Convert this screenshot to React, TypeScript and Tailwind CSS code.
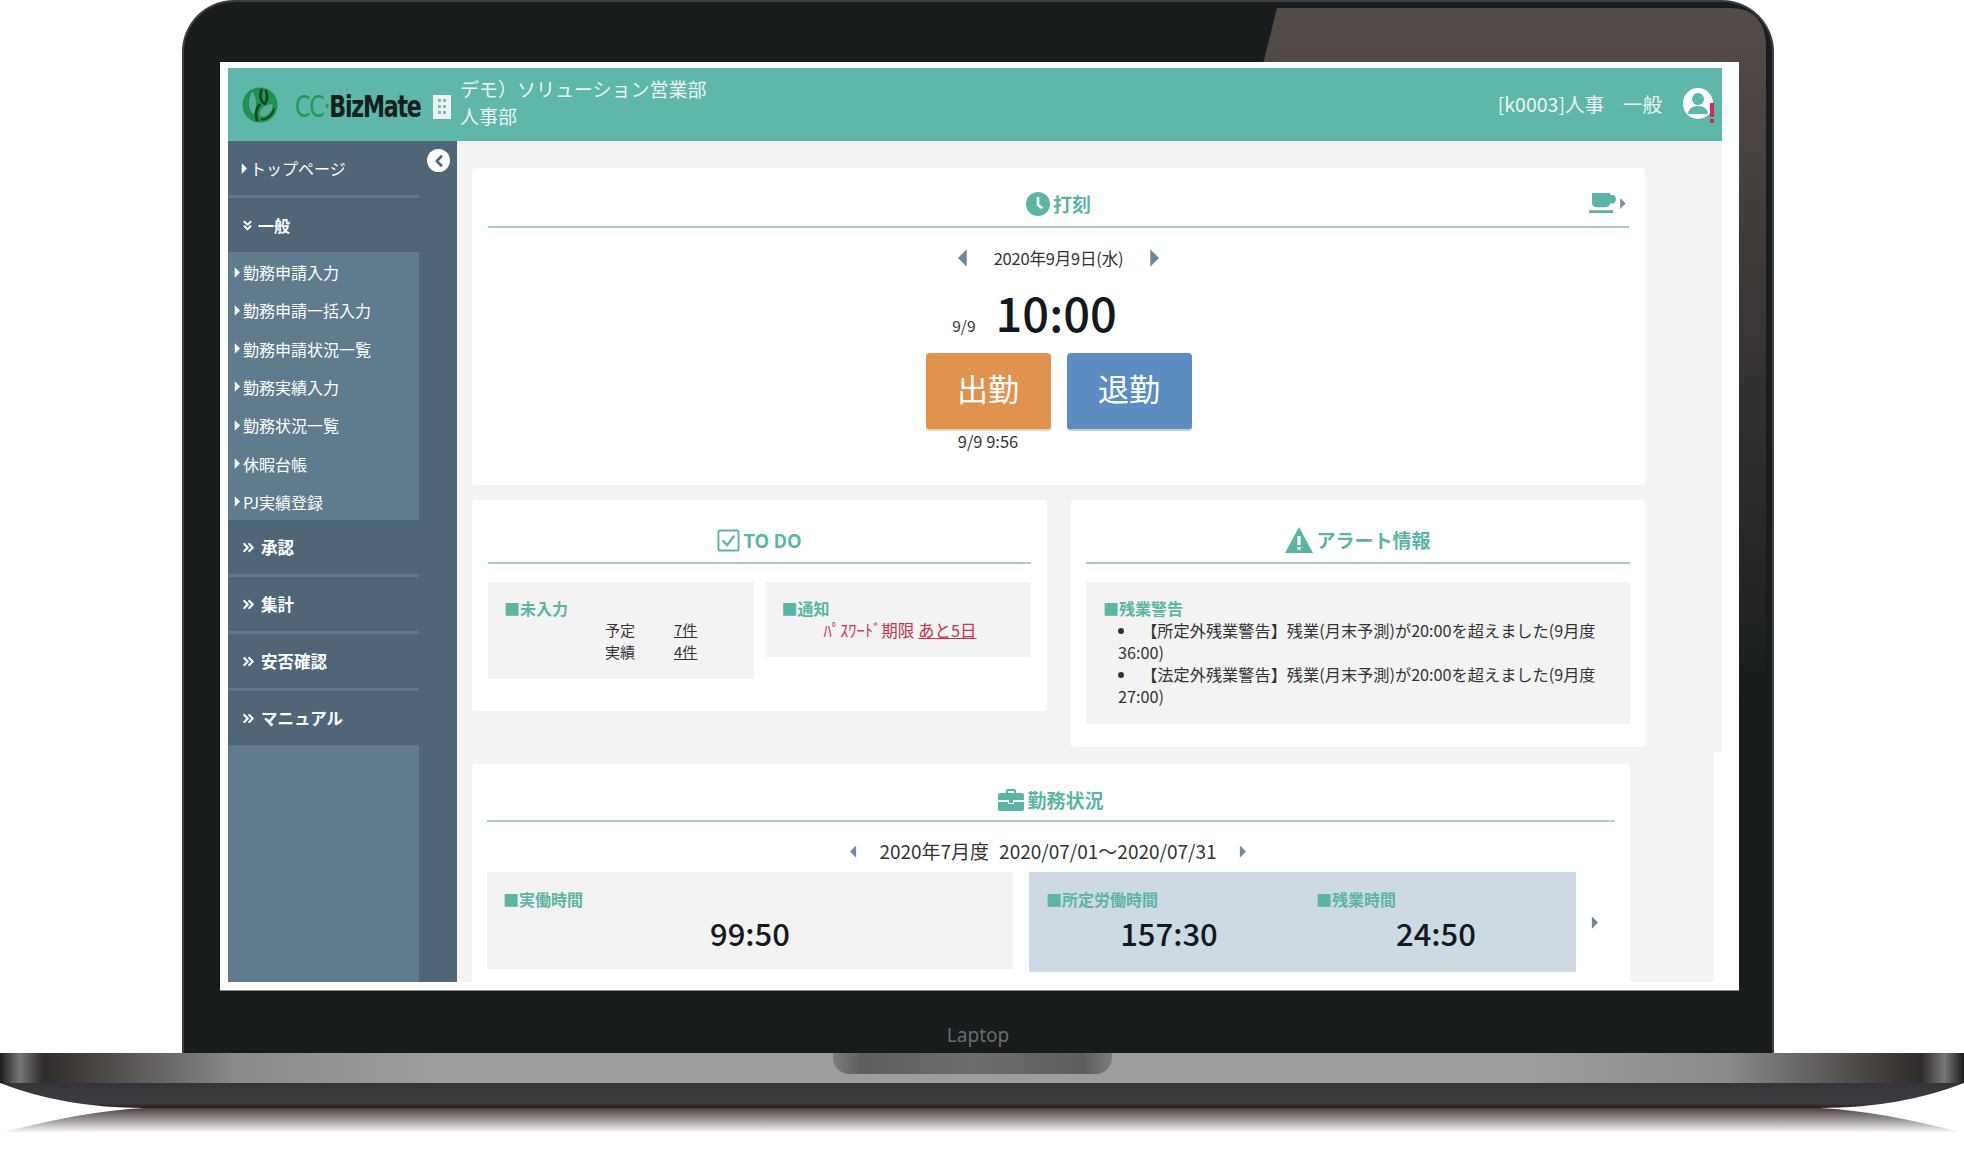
import { ChevronsDown, ChevronsRight, ChevronLeft } from "lucide-react";

const cjk = { fontFamily: '"Noto Sans CJK JP", "Noto Sans", sans-serif' };

const subItems = ["勤務申請入力", "勤務申請一括入力", "勤務申請状況一覧", "勤務実績入力", "勤務状況一覧", "休暇台帳", "PJ実績登録"];
const lowerItems = ["承認", "集計", "安否確認", "マニュアル"];

function TriRight({ className }: { className?: string }) {
  return (
    <svg viewBox="0 0 8 14" className={className}>
      <path d="M1 0 L8 7 L1 14 Z" fill="currentColor" />
    </svg>
  );
}

function TriLeft({ className }: { className?: string }) {
  return (
    <svg viewBox="0 0 8 14" className={className}>
      <path d="M7 0 L0 7 L7 14 Z" fill="currentColor" />
    </svg>
  );
}

function Logo() {
  return (
    <svg viewBox="0 0 40 40" className="w-[38px] h-[38px] shrink-0">
      <circle cx="20" cy="20" r="18.5" fill="#1f9150" />
      <path d="M12 6 C7 13 7 24 13 30 C17 24 17 13 12 6 Z" fill="#58ad9d" />
      <path d="M20 32 C19 24 24 20 33 19 C34 27 28 33 20 32 Z" fill="#58ad9d" />
      <path d="M22 3 C19 9 20 16 25 19 C28 15 28 9 26 4" stroke="#0d4024" strokeWidth="2.6" fill="none" />
      <path d="M17 37 C15 30 15 25 20 19" stroke="#0d4024" strokeWidth="2.6" fill="none" />
      <path d="M21 35 C27 36 33 31 35 24" stroke="#0d4024" strokeWidth="2" fill="none" />
    </svg>
  );
}

function SectionTitle({ icon, text, className }: { icon: React.ReactNode; text: string; className?: string }) {
  return (
    <div className={`flex items-center justify-center gap-[3px] border-b-2 border-[#a5d0c6] text-[#5cb4a6] font-bold ${className}`}>
      {icon}
      <span>{text}</span>
    </div>
  );
}

function Label({ text }: { text: string }) {
  return <div className="text-[16px] leading-[22px] font-bold text-[#5cb4a6] whitespace-nowrap">■{text}</div>;
}

function Sidebar() {
  return (
    <aside className="relative w-[229px] shrink-0 bg-[#4e6678] text-white flex flex-col" style={cjk}>
      <div className="w-[191px] flex flex-col flex-1 font-bold">
        <div className="h-[54px] flex items-center pl-[13px] gap-[3px] text-[16px] font-normal border-b-[3px] border-[#617889] box-content">
          <TriRight className="w-[6px] h-[11px]" />
          トップページ
        </div>
        <div className="h-[54px] flex items-center pl-[12px] gap-[3px] text-[16px]">
          <ChevronsDown className="w-[15px] h-[15px]" strokeWidth={3} />
          一般
        </div>
        <div className="h-[268px] bg-[#5f7b8e] flex flex-col font-normal">
          {subItems.map((item) => (
            <div key={item} className="h-[38.3px] flex items-center pl-[6px] pt-[2px] gap-[3px] text-[16px]">
              <TriRight className="w-[6px] h-[11px]" />
              {item}
            </div>
          ))}
        </div>
        {lowerItems.map((item, i) => (
          <div
            key={item}
            className={`h-[54px] box-content flex items-center pl-[12px] gap-[4px] text-[16.5px] ${i < 3 ? "border-b-[3px] border-[#617889]" : ""}`}
          >
            <ChevronsRight className="w-[17px] h-[17px]" strokeWidth={3} />
            {item}
          </div>
        ))}
        <div className="flex-1 bg-[#5f7b8e]" />
      </div>
      <button className="absolute left-[199px] top-[8px] w-[23px] h-[23px] rounded-full bg-white flex items-center justify-center text-[#4e6678]">
        <ChevronLeft className="w-[18px] h-[18px]" strokeWidth={3.5} />
      </button>
    </aside>
  );
}

function PunchCard() {
  return (
    <section className="w-[1173px] h-[317px] bg-white rounded-[4px] px-[16px] flex flex-col items-center">
      <div className="relative w-full">
        <SectionTitle
          className="h-[60px] w-full text-[19px] pt-[14px]"
          text="打刻"
          icon={
            <svg viewBox="0 0 24 24" className="w-[24px] h-[24px]">
              <circle cx="12" cy="12" r="12" fill="#5cb4a6" />
              <path d="M12 5 V13 L16.5 16" stroke="#fff" strokeWidth="2.6" fill="none" />
            </svg>
          }
        />
        <div className="absolute right-[3px] top-[25px] flex items-center gap-[3px] text-[#5cb4a6]">
          <svg viewBox="0 0 28 22" className="w-[27px] h-[21px]">
            <path d="M3 0 H22 V2 H24 Q28 2 28 6 Q28 11 24 11 H22 Q21 15 17 15 H8 Q4 15 3 11 Z" fill="currentColor" />
            <rect x="0" y="18" width="25" height="3" fill="currentColor" />
          </svg>
          <TriRight className="w-[7px] h-[11px] text-[#7a93a5]" />
        </div>
      </div>
      <div className="flex items-center gap-[25px] mt-[18px] h-[24px] text-[16.5px] text-[#333]">
        <TriLeft className="w-[10px] h-[18px] text-[#71889b]" />
        <span className="w-[131px] text-center whitespace-nowrap tracking-[-0.2px]">2020年9月9日(水)</span>
        <TriRight className="w-[10px] h-[18px] text-[#71889b]" />
      </div>
      <div className="flex items-end gap-[20px] mt-[18px] h-[48px] mr-[48px]">
        <span className="text-[15.5px] leading-[21px] text-[#333]">9/9</span>
        <span className="text-[47px] leading-[48px] font-medium text-[#14181f]">10:00</span>
      </div>
      <div className="flex gap-[16px] mt-[17px]">
        <div className="w-[125px] h-[78px] pb-[5px] rounded-[4px] bg-[#e0924f] text-white text-[31px] flex items-center justify-center border-b-2 border-[#efd0b4]">
          出勤
        </div>
        <div className="w-[125px] h-[78px] pb-[5px] rounded-[4px] bg-[#5b8dc1] text-white text-[31px] flex items-center justify-center border-b-2 border-[#bccfe3]">
          退勤
        </div>
      </div>
      <div className="w-[266px] text-[16.5px] leading-[22px] text-[#333] -mt-[1px]">
        <span className="block w-[125px] text-center whitespace-nowrap">9/9 9:56</span>
      </div>
    </section>
  );
}

function TodoCard() {
  return (
    <section className="w-[575px] h-[211px] bg-white rounded-[4px] px-[16px]">
      <SectionTitle
        className="h-[64px] text-[19px] pt-[18px]"
        text="TO DO"
        icon={
          <svg viewBox="0 0 24 24" className="w-[23px] h-[23px]" fill="none" stroke="#5cb4a6" strokeWidth="2">
            <rect x="1.5" y="1.5" width="21" height="21" rx="2" />
            <path d="M6 12 L10.5 17 L18 7" strokeWidth="2.4" />
          </svg>
        }
      />
      <div className="flex items-start gap-[11px] mt-[18px]">
        <div className="w-[266px] h-[97px] bg-[#f3f3f3] pl-[16px] pt-[15px] text-[#333]">
          <Label text="未入力" />
          <div className="grid grid-cols-[69px_auto] justify-start pl-[101px] text-[15px] leading-[22px]">
            <span>予定</span>
            <span className="underline">7件</span>
            <span>実績</span>
            <span className="underline">4件</span>
          </div>
        </div>
        <div className="w-[267px] h-[75px] bg-[#f3f3f3] pl-[17px] pt-[15px]">
          <Label text="通知" />
          <div className="pl-[42px] text-[16.5px] leading-[22px] text-[#c5354f] whitespace-nowrap">
            ﾊﾟｽﾜｰﾄﾞ期限 <span className="underline">あと5日</span>
          </div>
        </div>
      </div>
    </section>
  );
}

function AlertCard() {
  return (
    <section className="w-[574px] h-[247px] bg-white rounded-[4px] px-[15px]">
      <SectionTitle
        className="h-[64px] text-[19px] pt-[18px]"
        text="アラート情報"
        icon={
          <svg viewBox="0 0 28 26" className="w-[28px] h-[26px]">
            <path d="M14 0 L28 26 H0 Z" fill="#5cb4a6" />
            <rect x="12.4" y="9" width="3.2" height="9" fill="#fff" />
            <rect x="12.4" y="20" width="3.2" height="3" fill="#fff" />
          </svg>
        }
      />
      <div className="mt-[18px] h-[142px] bg-[#f3f3f3] pl-[17px] pt-[15px] pr-[30px] text-[#333]">
        <Label text="残業警告" />
        <ul className="list-disc list-inside pl-[15px] text-[16.2px] leading-[22px]">
          <li>【所定外残業警告】残業(月末予測)が20:00を超えました(9月度 36:00)</li>
          <li>【法定外残業警告】残業(月末予測)が20:00を超えました(9月度 27:00)</li>
        </ul>
      </div>
    </section>
  );
}

function WorkCard() {
  return (
    <section className="w-[1158px] bg-white rounded-t-[4px] px-[15px] flex-1">
      <SectionTitle
        className="h-[58px] text-[19px] pt-[16px] border-b"
        text="勤務状況"
        icon={
          <svg viewBox="0 0 26 22" className="w-[26px] h-[22px]">
            <path d="M8 5 V2 Q8 0 10 0 H16 Q18 0 18 2 V5 H16 V2 H10 V5 Z" fill="#5cb4a6" />
            <path d="M2 4 H24 Q26 4 26 6 V11 H0 V6 Q0 4 2 4 Z" fill="#5cb4a6" />
            <path d="M0 13 H10 V15 H16 V13 H26 V20 Q26 22 24 22 H2 Q0 22 0 20 Z" fill="#5cb4a6" />
            <rect x="11" y="11" width="4" height="3" fill="#5cb4a6" />
          </svg>
        }
      />
      <div className="flex items-center justify-center gap-[10px] h-[50px] pt-[8px] text-[19px] text-[#333] whitespace-nowrap pr-[6px]">
        <TriLeft className="w-[7px] h-[13px] text-[#71889b] mr-[12px]" />
        <span>2020年7月度</span>
        <span>2020/07/01～2020/07/31</span>
        <TriRight className="w-[7px] h-[13px] text-[#71889b] ml-[12px]" />
      </div>
      <div className="flex items-start">
        <div className="w-[526px] h-[97px] bg-[#f2f2f2] pl-[16px] pt-[16px]">
          <Label text="実働時間" />
          <div className="text-center pr-[16px] text-[31px] leading-[44px] mt-[1px] font-medium text-[#14181f]">99:50</div>
        </div>
        <div className="ml-[16px] w-[547px] h-[100px] bg-[#cedae3] pt-[16px] pl-[17px] flex">
          <div className="w-[270px]">
            <Label text="所定労働時間" />
            <div className="text-center text-[31px] leading-[44px] mt-[1px] font-medium text-[#14181f] pr-[24px]">157:30</div>
          </div>
          <div className="flex-1">
            <Label text="残業時間" />
            <div className="text-center text-[31px] leading-[44px] mt-[1px] font-medium text-[#14181f] pr-[20px]">24:50</div>
          </div>
        </div>
        <TriRight className="w-[7px] h-[13px] text-[#71889b] ml-[15px] mt-[44px]" />
      </div>
    </section>
  );
}

function Screen() {
  return (
    <div className="relative z-10 ml-[36px] mt-[60px] w-[1519px] h-[929px] bg-white border-b border-[#888] pt-[6px] pl-[8px] pr-[17px] pb-[8px] flex flex-col">
      <header className="relative h-[73px] shrink-0 bg-[#5fb7a9] flex items-center text-[#edf5f3]" style={cjk}>
        <div className="ml-[13px]">
          <Logo />
        </div>
        <div
          className="ml-[16px] w-[125px] mt-[4px] text-[30px] font-bold tracking-[-1.5px] whitespace-nowrap origin-left scale-x-[0.82]"
          style={{ fontFamily: '"DejaVu Sans Condensed", "Liberation Sans", sans-serif' }}
        >
          <span className="text-[#1f9a52] font-normal">CC·</span>
          <span className="text-[#12201c]">BizMate</span>
        </div>
        <svg viewBox="0 0 18 24" className="w-[18px] h-[24px] ml-[13px] mt-[4px] shrink-0">
          <rect width="18" height="24" fill="#edf5f3" />
          {[4, 10, 16].map((y) => (
            <g key={y} fill="#8fb5ad">
              <rect x="5" y={y} width="3" height="3" />
              <rect x="10" y={y} width="3" height="3" />
            </g>
          ))}
        </svg>
        <div className="ml-[9px] -mt-[6px] text-[19px] leading-[27px]">
          <div>デモ）ソリューション営業部</div>
          <div>人事部</div>
        </div>
        <div className="ml-auto -mt-[2px] flex items-center text-[19.5px] gap-[19px] pr-[9px]">
          <span>[k0003]人事</span>
          <span>一般</span>
          <div className="ml-[2px] w-[30px] h-[31px] rounded-full bg-white overflow-hidden">
            <svg viewBox="0 0 30 30" className="w-[30px] h-[30px]">
              <circle cx="15" cy="11" r="6" fill="#5fb7a9" />
              <path d="M5 26 Q6 18 15 18 Q24 18 25 26 Z" fill="#5fb7a9" />
            </svg>
          </div>
          <div className="absolute right-[8px] top-[35px] w-[4px] h-[20px] flex flex-col gap-[2px]">
            <div className="flex-1 bg-[#c9304a]" />
            <div className="h-[4px] bg-[#c9304a]" />
          </div>
        </div>
      </header>
      <div className="flex flex-1 min-h-0">
        <Sidebar />
        <main className="flex-1 flex flex-col text-[#333]" style={cjk}>
          <div className="bg-[#f3f3f3] pt-[27px] pl-[15px] pb-[5px] flex flex-col gap-[15px]">
            <PunchCard />
            <div className="flex gap-[24px] h-[247px]">
              <TodoCard />
              <AlertCard />
            </div>
          </div>
          <div className="flex-1 min-h-0 bg-[#f3f3f3] mr-[8px] pt-[12px] pl-[15px] flex flex-col">
            <WorkCard />
          </div>
        </main>
      </div>
    </div>
  );
}

function Base() {
  return (
    <div className="relative">
      <div className="h-[30px] bg-[linear-gradient(90deg,#1c1c1c_0,#777_1%,#2f2b2a_2.2%,#413c3a_4%,#8a8a8a_12%,#9c9e9d_22%,#9c9e9d_78%,#8a8a8a_88%,#413c3a_96%,#2f2b2a_97.8%,#777_99%,#1c1c1c_100%)] flex justify-center">
        <div className="w-[279px] h-[21px] ml-[-19px] rounded-b-[16px] bg-[linear-gradient(90deg,#7c7c7c,#5e5e5e_10%,#6c6c6c_50%,#5e5e5e_90%,#7c7c7c)]" />
      </div>
      <svg viewBox="0 0 1964 50" className="block w-[1964px] h-[50px]">
        <defs>
          <linearGradient id="baseDark" x1="0" y1="0" x2="0" y2="1">
            <stop offset="0" stopColor="#33353b" />
            <stop offset="0.8" stopColor="#413c3d" />
            <stop offset="1" stopColor="#241f1f" />
          </linearGradient>
          <linearGradient id="baseShadow" x1="0" y1="0" x2="0" y2="1">
            <stop offset="0" stopColor="#4a3f3f" />
            <stop offset="0.5" stopColor="#a49c9c" />
            <stop offset="1" stopColor="#ffffff" />
          </linearGradient>
        </defs>
        <path d="M0 0 H1964 Q1900 25 1820 25 H144 Q64 25 0 0 Z" fill="url(#baseDark)" />
        <path d="M144 25 H1820 Q1880 28 1964 50 H0 Q84 28 144 25 Z" fill="url(#baseShadow)" />
      </svg>
    </div>
  );
}

export default function App() {
  return (
    <div className="w-[1964px] h-[1164px] bg-white overflow-hidden">
      <div className="relative ml-[182px] w-[1592px] h-[1053px] bg-[#181c1d] rounded-t-[52px] border-x-[2px] border-t-[2px] border-[#3c3e42] flex flex-col overflow-hidden">
        <svg viewBox="0 0 1592 700" className="absolute left-[-2px] top-[6px] w-[1592px] h-[700px]">
          <defs>
            <linearGradient id="shine" x1="0" y1="0" x2="0" y2="1">
              <stop offset="0" stopColor="#544c49" />
              <stop offset="0.25" stopColor="#453f3d" />
              <stop offset="1" stopColor="#181c1d" />
            </linearGradient>
          </defs>
          <path d="M1095 0 H1548 Q1584 0 1584 40 V700 H1095 L1081 56 Z" fill="url(#shine)" />
        </svg>
        <Screen />
        <div className="mt-[31px] relative z-10 text-center text-[19px] leading-[26px] text-[#6a6d6e]" style={{ fontFamily: '"Noto Sans", sans-serif' }}>
          Laptop
        </div>
      </div>
      <Base />
    </div>
  );
}
